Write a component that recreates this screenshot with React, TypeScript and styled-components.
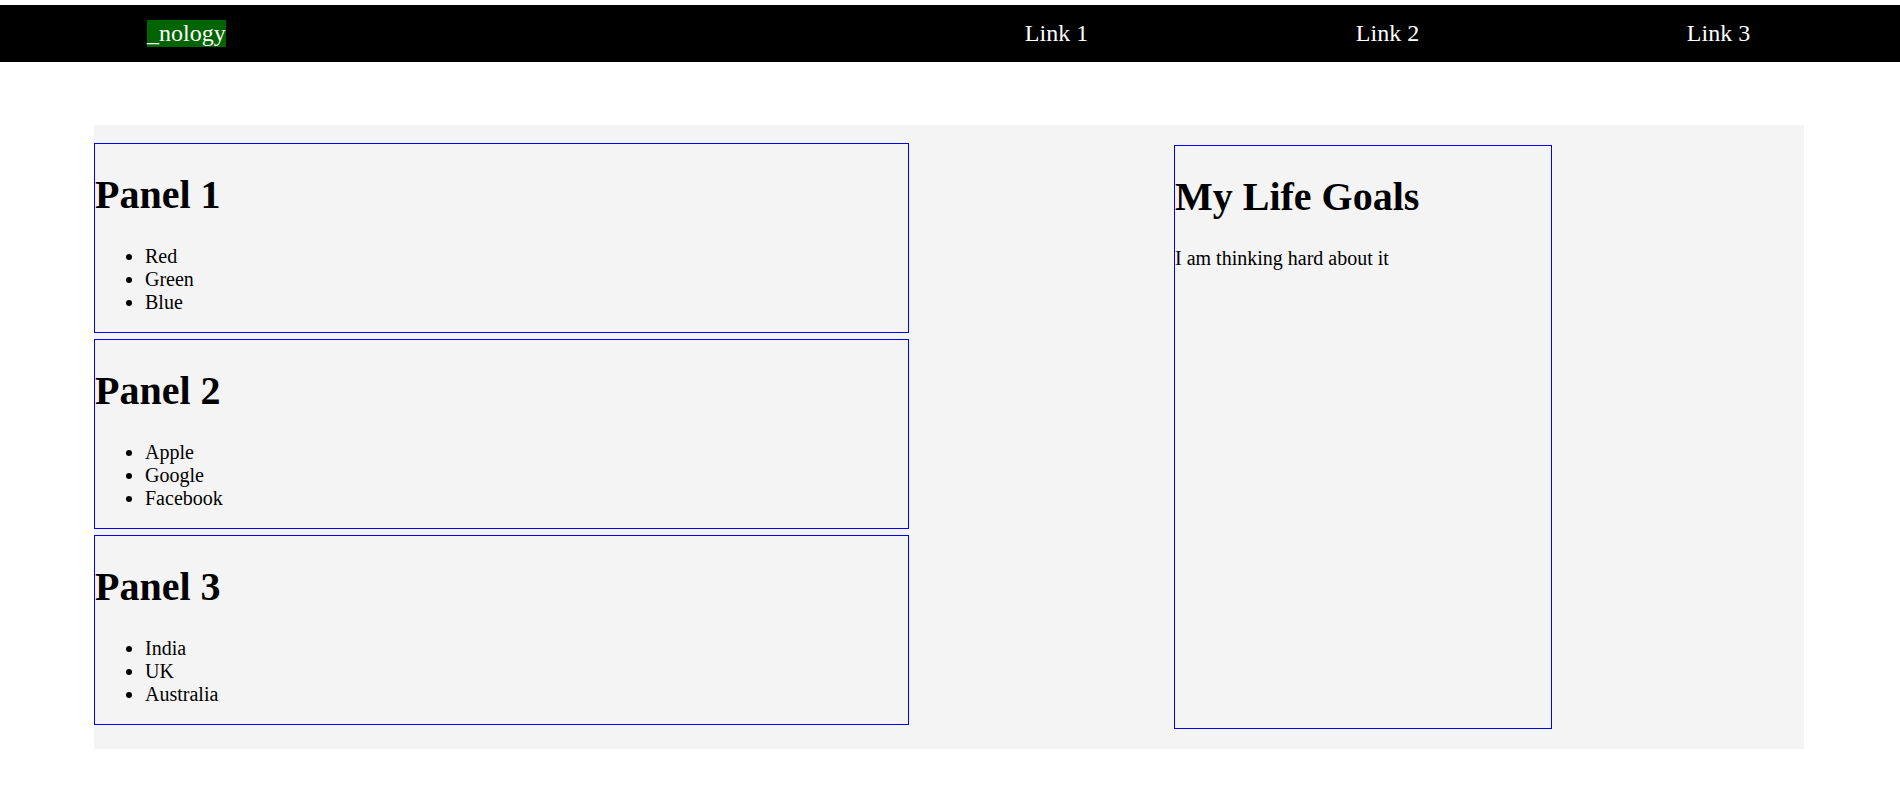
import styled, { createGlobalStyle } from "styled-components";

const GlobalStyle = createGlobalStyle`
  body {
    margin: 0;
    padding-top: 5px;
    font-family: "Liberation Serif", "Times New Roman", serif;
    font-size: 20px;
    color: #000;
    background: #fff;
  }
`;

const Nav = styled.nav`
  height: 57px;
  background-color: #000;
  display: flex;
  align-items: center;
`;

const Logo = styled.span`
  margin-left: 147px;
  font-size: 24px;
  color: #fff;
  background-color: #006400;
`;

const Links = styled.ul`
  margin: 0 16px 0 auto;
  padding: 0;
  width: 993px;
  list-style: none;
  display: flex;
  justify-content: space-around;
`;

const LinkItem = styled.li`
  font-size: 24px;
  color: #fff;
`;

const Main = styled.main`
  width: 1710px;
  margin: 63px 0 0 94px;
  padding: 18px 0 20px 0;
  background-color: #f4f4f4;
  display: flex;
  align-items: flex-start;
`;

const Column = styled.div`
  width: 815px;
  display: flex;
  flex-direction: column;
  gap: 6px;
`;

const Panel = styled.section`
  border: 1px solid blue;
  height: 190px;
  box-sizing: border-box;

  h1 {
    font-size: 40px;
    margin: 26.8px 0;
  }
`;

const List = styled.ul`
  margin: 20px 0;
  padding-left: 50px;
`;

const Goals = styled.aside`
  width: 378px;
  height: 584px;
  box-sizing: border-box;
  margin: 2px 0 0 265px;
  border: 1px solid blue;

  h1 {
    font-size: 40px;
    margin: 26.8px 0;
  }
  p {
    margin: 20px 0;
  }
`;

const panels = [
  { title: "Panel 1", items: ["Red", "Green", "Blue"] },
  { title: "Panel 2", items: ["Apple", "Google", "Facebook"] },
  { title: "Panel 3", items: ["India", "UK", "Australia"] },
];

function App() {
  return (
    <>
      <GlobalStyle />
      <Nav>
        <Logo>_nology</Logo>
        <Links>
          <LinkItem>Link 1</LinkItem>
          <LinkItem>Link 2</LinkItem>
          <LinkItem>Link 3</LinkItem>
        </Links>
      </Nav>
      <Main>
        <Column>
          {panels.map((p) => (
            <Panel key={p.title}>
              <h1>{p.title}</h1>
              <List>
                {p.items.map((item) => (
                  <li key={item}>{item}</li>
                ))}
              </List>
            </Panel>
          ))}
        </Column>
        <Goals>
          <h1>My Life Goals</h1>
          <p>I am thinking hard about it</p>
        </Goals>
      </Main>
    </>
  );
}

export default App;
